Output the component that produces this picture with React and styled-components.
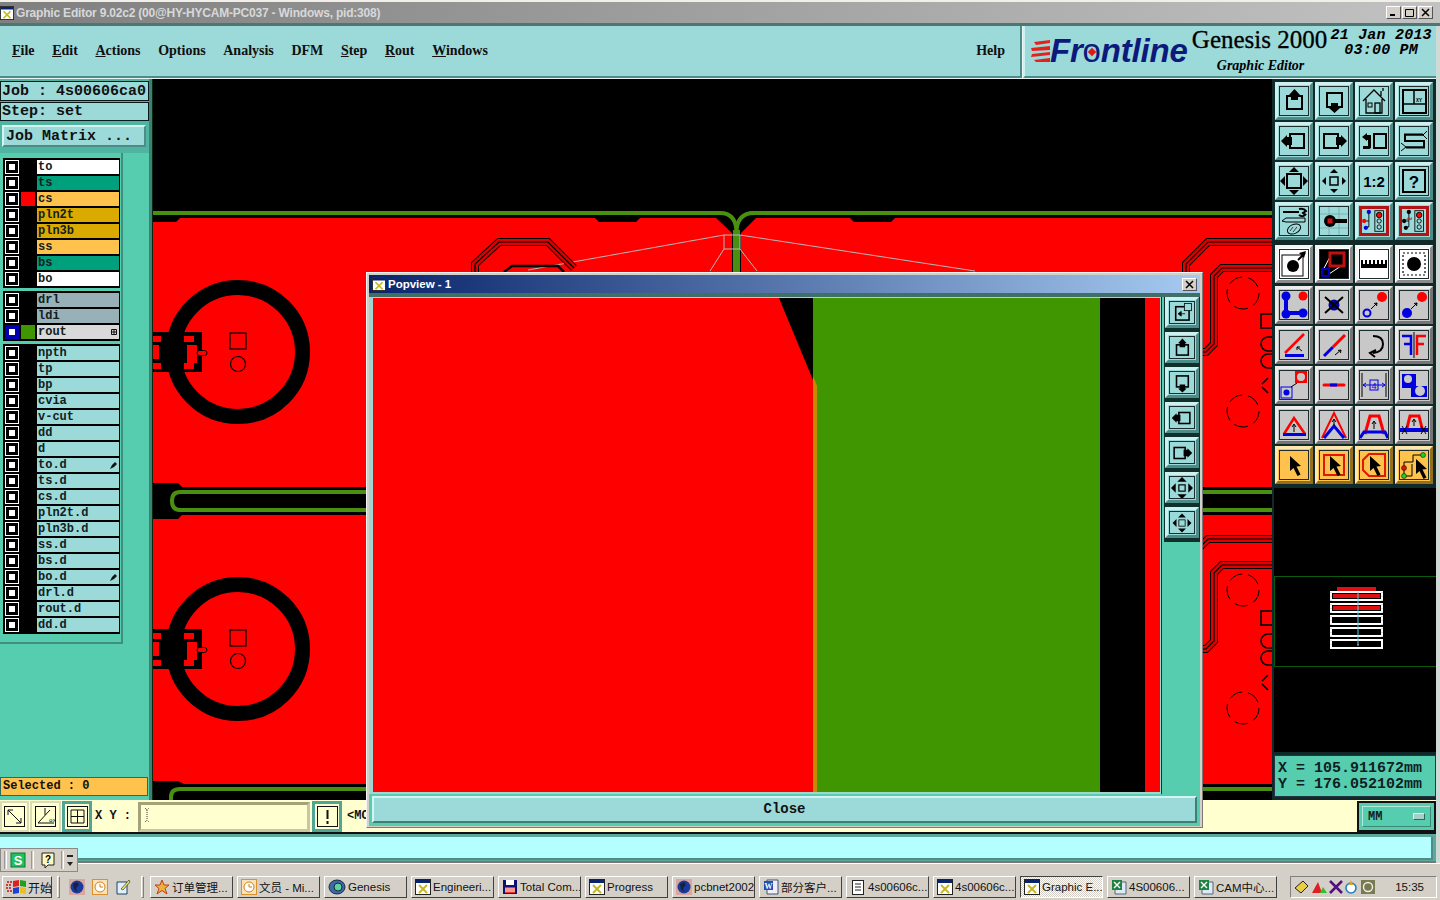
import React from 'react';
import styled, { createGlobalStyle } from 'styled-components';

const GlobalStyle = createGlobalStyle`
  html, body { margin: 0; padding: 0; background: #d4d0c8; overflow: hidden; }
  * { box-sizing: border-box; }
`;

const SANS = '"Liberation Sans", "Noto Sans CJK SC", sans-serif';
const SERIF = '"Liberation Serif", serif';
const MONO = '"Liberation Mono", monospace';
const FACE = '#9cd9d9';
const TEAL = '#57cdb0';

const tones = {
  teal: { face: FACE, light: '#cdf1f1', dark: '#4d8c88', line: '#1d3a3a' },
  gray: { face: '#c8c8c8', light: '#ededed', dark: '#757575', line: '#222' },
  white: { face: '#fff', light: '#f4f4f4', dark: '#8a8a8a', line: '#222' },
  orange: { face: '#ffc24d', light: '#ffe7ad', dark: '#94701c', line: '#222' },
};

const Screen = styled.div`
  position: relative;
  width: 1440px;
  height: 900px;
  overflow: hidden;
  background: #d4d0c8;
  display: flex;
  flex-direction: column;
`;

const TitleBar = styled.div`
  height: 26px;
  flex-shrink: 0;
  border-top: 2px solid #f2efe8;
  border-bottom: 3px solid #4d7773;
  background: linear-gradient(90deg, #7f7f7f, #c2c2c2);
  display: flex;
  align-items: center;
  font: bold 12px ${SANS};
  color: #d8d8d8;
  letter-spacing: -0.2px;
`;

const TitleText = styled.span`
  flex: 1;
  margin-left: 2px;
`;

const WinButtons = styled.div`
  display: flex;
  gap: 1px;
  margin-right: 7px;
`;

const WinButton = styled.div`
  width: 15px;
  height: 13px;
  background: #d4d0c8;
  border: 1px solid;
  border-color: #fff #555 #555 #fff;
  color: #000;
  display: flex;
  align-items: center;
  justify-content: center;
`;

const Body = styled.div`
  flex-shrink: 0;
  display: flex;
  flex-direction: column;
  border-right: 4px solid #cfd9d5;
`;

const MenuRow = styled.div`
  height: 53px;
  flex-shrink: 0;
  display: flex;
  background: #e8f7f5;
  padding-bottom: 1px;
`;

const MenuBar = styled.div`
  width: 1022px;
  background: ${FACE};
  border-bottom: 2px solid #4d8c88;
  border-right: 2px solid #4d8c88;
  display: flex;
  align-items: center;
  padding: 0 15px 0 12px;
  gap: 17.6px;
  font: bold 14px ${SERIF};
  color: #101010;
`;

const MenuItem = styled.span`
  &::first-letter {
    text-decoration: ${({ $plain }) => ($plain ? 'none' : 'underline')};
  }
`;

const Spacer = styled.span`
  flex: 1;
`;

const LogoPanel = styled.div`
  flex: 1;
  margin-left: 1px;
  background: ${FACE};
  border-left: 2px solid #cdf1f1;
  border-bottom: 2px solid #4d8c88;
  display: flex;
  position: relative;
  padding-left: 5px;
  color: #000;
`;

const LogoMark = styled.div`
  display: flex;
  align-items: center;
  height: 49px;
  padding-top: 1px;
`;

const LogoWord = styled.span`
  font: italic bold 33px ${SANS};
  color: #0c1a7c;
  letter-spacing: -0.2px;
`;

const LogoO = styled.span`
  position: relative;
  font-style: normal;
  font-weight: 400;
  &::after {
    content: '';
    position: absolute;
    left: 6px;
    top: 17px;
    width: 6px;
    height: 6px;
    background: #e01818;
    transform: rotate(45deg);
  }
`;

const Product = styled.div`
  width: 140px;
  margin-left: 2px;
  text-align: center;
`;

const ProductName = styled.div`
  font: 25px/28px ${SERIF};
  -webkit-text-stroke: 0.3px #000;
  white-space: nowrap;
`;

const ProductSub = styled.div`
  font: italic bold 14px ${SERIF};
  margin-top: 4px;
  padding-left: 2px;
`;

const Clock = styled.div`
  margin-left: 1px;
  padding-top: 2px;
  font: italic bold 15px/15px ${MONO};
  letter-spacing: 0.2px;
  text-align: center;
  white-space: pre;
`;

const Main = styled.div`
  height: 721px;
  flex-shrink: 0;
  display: flex;
  background: #000;
`;

const LeftPanel = styled.div`
  width: 152px;
  background: ${TEAL};
  border-right: 3px solid #3f7f74;
  display: flex;
  flex-direction: column;
`;

const JobBlock = styled.div`
  height: 74px;
  flex-shrink: 0;
  padding: 2px 0 0;
  background: #4fb5a0;
  display: flex;
  flex-direction: column;
  gap: 1px;
`;

const JobRow = styled.div`
  height: ${({ $h }) => $h}px;
  flex-shrink: 0;
  background: ${FACE};
  border: 1px solid #0a1a1a;
  font: bold 15px/${({ $line }) => $line}px ${MONO};
  color: #111;
  padding-left: 1px;
  white-space: pre;
`;

const MatrixButton = styled.div`
  height: 22px;
  flex-shrink: 0;
  margin: 3px 3px 0 2px;
  background: ${FACE};
  border: 2px solid;
  border-color: #d4f4f4 #4d8c88 #4d8c88 #d4f4f4;
  font: bold 15px/20px ${MONO};
  padding-left: 2px;
  color: #111;
  white-space: pre;
`;

const LayerArea = styled.div`
  height: 491px;
  width: 123px;
  background: ${TEAL};
  border-right: 2px solid #3f8f80;
  border-bottom: 2px solid #3f8f80;
  padding: 5px 0 0 3px;
  display: flex;
  flex-direction: column;
  gap: 3px;
  flex-shrink: 0;
`;

const LayerGroup = styled.div`
  width: 117px;
  background: #000;
  padding: 2px 0;
  display: flex;
  flex-direction: column;
  gap: 2px;
`;

const LayerRow = styled.div`
  height: 14px;
  display: flex;
`;

const Check = styled.div`
  width: 14px;
  height: 14px;
  margin-left: 2px;
  background: #fff;
  border: 1px solid ${({ $on }) => ($on ? '#0000b0' : '#fff')};
  box-shadow: inset 0 0 0 3px ${({ $on }) => ($on ? '#0000b0' : '#000')};
`;

const Swatch = styled.div`
  width: 14px;
  height: 14px;
  margin: 0 2px 0 2px;
  background: ${({ $color }) => $color || '#000'};
`;

const LayerName = styled.div`
  width: 82px;
  height: 14px;
  background: ${({ $color }) => $color};
  font: bold 12px/14px ${MONO};
  color: #102020;
  padding-left: 1px;
  display: flex;
  justify-content: space-between;
  align-items: center;
`;

const Mark = styled.span`
  margin-right: 2px;
  display: flex;
`;

const SelectedBar = styled.div`
  height: 19px;
  margin: auto 1px 4px 0;
  background: #ffc24d;
  border: 1px solid #2c6a60;
  font: bold 12px/17px ${MONO};
  color: #111;
  padding-left: 2px;
`;

const Canvas = styled.div`
  width: 1120px;
  background: #000;
`;

const Plot = styled.svg`
  display: block;
`;

const RightPanel = styled.div`
  flex: 1;
  background: #102a2a;
  display: flex;
  flex-direction: column;
  padding: 3px 0 0 3px;
`;

const IconGrid = styled.div`
  display: grid;
  grid-template-columns: repeat(4, 38px);
  gap: ${({ $gap }) => $gap ?? 2}px 2px;
  margin-bottom: ${({ $after }) => $after ?? 0}px;
`;

const ToolButton = styled.div`
  width: ${({ $w }) => $w || 38}px;
  height: ${({ $h }) => $h || 38}px;
  flex-shrink: 0;
  background: ${({ $tone }) => tones[$tone].face};
  border: 3px solid;
  border-color: ${({ $tone }) =>
    `${tones[$tone].light} ${tones[$tone].dark} ${tones[$tone].dark} ${tones[$tone].light}`};
  padding: 1px;
  display: flex;
`;

const ToolFace = styled.div`
  flex: 1;
  min-width: 0;
  border: ${({ $alert }) => ($alert ? '3px solid #b01414' : '1px solid #1c2c2c')};
  background: ${({ $dark }) => ($dark ? '#000' : 'transparent')};
  display: flex;
  align-items: center;
  justify-content: center;
  overflow: hidden;
`;

const MiniMap = styled.div`
  height: 264px;
  flex-shrink: 0;
  margin: 4px 0 3px -1px;
  background: #000;
`;

const Coords = styled.div`
  height: 42px;
  flex-shrink: 0;
  margin-left: -1px;
  background: ${TEAL};
  border: 1px solid #234;
  font: bold 15px/16px ${MONO};
  color: #102020;
  padding: 5px 0 0 3px;
  white-space: pre;
`;

const CommandRow = styled.div`
  height: 34px;
  flex-shrink: 0;
  background: #ffffd0;
  border-bottom: 2px solid #111;
  display: flex;
  align-items: stretch;
  padding-top: 1px;
`;

const CmdButton = styled.div`
  width: ${({ $w }) => $w}px;
  margin-right: ${({ $mr }) => $mr ?? 0}px;
  background: #ffffd0;
  border: ${({ $teal }) => ($teal ? '3px solid #4fa596' : '2px solid #dcdcb4')};
  display: flex;
  align-items: center;
  justify-content: center;
`;

const CmdIcon = styled.div`
  width: 21px;
  height: 21px;
  border: 1px solid #111;
  display: flex;
`;

const XYLabel = styled.div`
  width: 46px;
  padding-left: 3px;
  font: bold 12px/30px ${MONO};
  color: #111;
  white-space: pre;
`;

const CmdInput = styled.div`
  width: 172px;
  margin: 1px 2px 0 0;
  background: #ffffd0;
  border: 3px solid;
  border-color: #a3a37a #c8c8a0 #c8c8a0 #a3a37a;
  padding: 2px 0 0 3px;
  display: flex;
`;

const Prompt = styled.div`
  margin-left: 5px;
  font: bold 12px/31px ${MONO};
  color: #111;
`;

const UnitBox = styled.div`
  width: 79px;
  margin-left: auto;
  background: ${TEAL};
  border: 2px solid #111;
  padding: 3px;
  display: flex;
`;

const UnitButton = styled.div`
  flex: 1;
  background: ${TEAL};
  border: 1px solid;
  border-color: #b4eadb #3b8a76 #3b8a76 #b4eadb;
  font: bold 12px/22px ${MONO};
  color: #102020;
  padding-left: 5px;
  display: flex;
  justify-content: space-between;
  align-items: center;
`;

const UnitKnob = styled.span`
  width: 12px;
  height: 7px;
  margin-right: 5px;
  background: #a8cfc6;
  border: 1px solid;
  border-color: #e0f4ee #2b6a5a #2b6a5a #e0f4ee;
`;

const MessageWrap = styled.div`
  height: 29px;
  flex-shrink: 0;
  background: #5da79b;
  padding: 3px 0 1px;
  border-bottom: 2px solid #777;
`;

const MessageBar = styled.div`
  height: 23px;
  background: #b4ffff;
  border-right: 2px solid #4d8c88;
  border-bottom: 2px solid #4d8c88;
  margin-right: 3px;
`;

const FloatTools = styled.div`
  position: absolute;
  left: 0;
  top: 848px;
  width: 78px;
  height: 24px;
  background: #d4d0c8;
  border: 1px solid #8a8a8a;
  display: flex;
  align-items: center;
  z-index: 3;
`;

const Grip = styled.span`
  width: 3px;
  height: 18px;
  margin: 0 ${({ $r }) => $r}px 0 ${({ $l }) => $l}px;
  border-left: 1px solid #999;
  border-right: 1px solid #fff;
`;

const Taskbar = styled.div`
  flex: 1;
  background: #d4d0c8;
  border-top: 1px solid #fff;
  display: flex;
  align-items: center;
  padding: 12px 3px 2px 2px;
  font: 11.5px ${SANS};
  color: #111;
`;

const StartButton = styled.div`
  width: 50px;
  height: 22px;
  flex-shrink: 0;
  border: 1px solid;
  border-color: #fff #404040 #404040 #fff;
  display: flex;
  align-items: center;
  padding-left: 3px;
  gap: 1px;
  font-size: 12px;
  white-space: nowrap;
`;

const Divider = styled.span`
  width: 3px;
  height: 22px;
  flex-shrink: 0;
  margin: 0 ${({ $r }) => $r}px 0 ${({ $l }) => $l}px;
  border: 1px solid;
  border-color: #fff #808080 #808080 #fff;
`;

const Quick = styled.div`
  display: flex;
  gap: 7px;
  align-items: center;
`;

const TaskButtons = styled.div`
  display: flex;
  gap: 4px;
`;

const TaskButton = styled.div`
  width: 83px;
  height: 22px;
  flex-shrink: 0;
  border: 1px solid;
  border-color: ${({ $active }) =>
    $active ? '#404040 #fff #fff #404040' : '#fff #404040 #404040 #fff'};
  background: ${({ $active }) =>
    $active ? 'repeating-conic-gradient(#fff 0 25%, #d4d0c8 0 50%) 0 0 / 2px 2px' : '#d4d0c8'};
  display: flex;
  align-items: center;
  padding-left: 3px;
  gap: 2px;
  white-space: nowrap;
  overflow: hidden;
`;

const Tray = styled.div`
  margin-left: auto;
  width: 147px;
  height: 22px;
  flex-shrink: 0;
  border: 1px solid;
  border-color: #808080 #fff #fff #808080;
  display: flex;
  align-items: center;
  padding-left: 3px;
  gap: 1px;
`;

const TrayTime = styled.span`
  margin-left: auto;
  margin-right: 12px;
`;

/* floating window */
const Popup = styled.div`
  position: absolute;
  left: 366px;
  top: 272px;
  width: 837px;
  height: 556px;
  background: #d4d0c8;
  border: 1px solid;
  border-color: #f4f4f4 #7a7a7a #7a7a7a #f4f4f4;
  padding: 2px;
  display: flex;
  flex-direction: column;
  z-index: 2;
`;

const PopupTitle = styled.div`
  height: 18px;
  flex-shrink: 0;
  background: linear-gradient(90deg, #0a246a, #a6caf0);
  display: flex;
  align-items: center;
  padding-left: 3px;
  font: bold 11.5px ${SANS};
  color: #fff;
  gap: 2px;
`;

const PopupClose = styled(WinButton)`
  margin-left: auto;
  margin-right: 3px;
`;

const PopupBody = styled.div`
  height: 501px;
  flex-shrink: 0;
  background: ${TEAL};
  border-top: 4px solid #3f6f69;
  display: flex;
`;

const PlotFrame = styled.div`
  width: 794px;
  background: #9fd6cf;
  padding: 1px 0 0 4px;
`;

const SideTools = styled.div`
  flex: 1;
  padding: 0 0 0 2px;
  background: ${TEAL};
  border-left: 1px solid #1c2c2c;
  display: flex;
  flex-direction: column;
`;

const SideButton = styled.div`
  border-bottom: 2px solid #10302c;
  background: #10302c;
  width: 36px;
  height: 35px;
  padding: 0 1px;
  display: flex;
  flex-shrink: 0;
`;

const CloseRow = styled.div`
  flex: 1;
  background: ${TEAL};
  padding: 2px 3px 3px 3px;
  display: flex;
`;

const CloseButton = styled.div`
  flex: 1;
  background: ${FACE};
  border: 2px solid;
  border-color: #d4f4f4 #3f7f74 #3f7f74 #d4f4f4;
  font: bold 14px/23px ${MONO};
  text-align: center;
  color: #111;
`;

/* icon bits */
const Ico = ({ children, size = 28 }) => (
  <svg width={size} height={size} viewBox="1 1 28 28">
    {children}
  </svg>
);

const k = '#000';
const box = (x, y, w, h, sw = 2) => <rect x={x} y={y} width={w} height={h} fill="none" stroke={k} strokeWidth={sw} />;
const B = '#0000e0';
const R = '#ff0000';

const Cursor = () => <path d="M11 6 L11 21 L14.5 18 L18.5 26 L21.5 24.5 L17.5 16.5 L22 16 Z" fill={k} />;

const Lights = ({ fill = R }) => (
  <>
    <rect x="16" y="3" width="10" height="24" fill="none" stroke={k} />
    <circle cx="21" cy="8" r="3.2" fill={fill} stroke={k} />
    <circle cx="21" cy="15" r="2.5" fill="none" stroke={k} />
    <circle cx="21" cy="22" r="2.5" fill="none" stroke={k} />
  </>
);

const fourArrows = (o, r) => (
  <path
    d={`M15 ${o} l${r} ${r} h${-2 * r} z M15 ${30 - o} l${r} ${-r} h${-2 * r} z M${o} 15 l${r} ${r} v${-2 * r} z M${30 - o} 15 l${-r} ${r} v${-2 * r} z`}
    fill={k}
  />
);

const topIcons = [
  [<>{box(8, 10, 15, 13)}<path d="M15.5 3 L10 9 H12 V14 H19 V9 H21 Z" fill={k} /></>],
  [<>{box(8, 7, 15, 14)}<path d="M12 17 H19 V22 H21 L15.5 27 L10 22 H12 Z" fill={k} /></>],
  [<><path d="M4 15 L15 4 L26 15 M7 13 V27 H23 V13 M22 5 V10 M24 2 V5" fill="none" stroke={k} strokeWidth="1.3" /><rect x="9" y="17" width="4" height="4" fill="none" stroke={k} /><rect x="16" y="17" width="5" height="10" fill="none" stroke={k} strokeWidth="1.3" /></>],
  [<>{box(4, 4, 23, 23)}<path d="M15 4 V18 M4 18 H27" stroke={k} strokeWidth="1.5" /><text x="17" y="16" fontSize="5" fontFamily={MONO} fontWeight="bold">XY</text></>],
  [<>{box(11, 8, 14, 14)}<path d="M2 15 L8 9 V11 H13 V19 H8 V21 Z" fill={k} /></>],
  [<>{box(5, 8, 14, 14)}<path d="M28 15 L22 9 V11 H17 V19 H22 V21 Z" fill={k} /></>],
  [<>{box(15, 8, 12, 14)}<path d="M3 11 L8 7 V9 H12 V21 Q12 23 9 23 H4 V20 H9 V14 H8 V15 Z" fill={k} /></>],
  [<><path d="M28 5 L24 9 H6 V15 H25 V21 H7 L2 25 M28 13 L24 9 M2 17 L7 21" fill="none" stroke={k} strokeWidth="1" /><path d="M24 8.5 H6 V15 H25 V21.5 H7" fill="none" stroke={k} strokeWidth="2" /></>],
  [<>{box(8, 8, 14, 14)}{fourArrows(1, 5)}</>],
  [<>{box(11, 11, 8, 8, 1.5)}{fourArrows(3, 4)}</>],
  [<text x="15" y="21" fontSize="15" fontWeight="bold" fontFamily={SANS} textAnchor="middle">1:2</text>],
  [<>{box(4, 4, 22, 22)}<text x="15" y="21.5" fontSize="17" fontWeight="bold" fontFamily={SANS} textAnchor="middle">?</text></>],
  [<><path d="M4 6 H20 M20 3 Q25 2 27 5 L24 7 Q26 9 27 8 Q24 12 20 9" fill="none" stroke={k} strokeWidth="2" /><path d="M3 15 L7 12 H26 V16 H7 Z" fill="none" stroke={k} /><ellipse cx="15" cy="23" rx="7" ry="4.5" fill="none" stroke={k} transform="rotate(-25 15 23)" /><path d="M11 25 L14 21 M14 26 L18 21" stroke={k} strokeWidth=".7" /></>],
  [<><path d="M10 1 V29 M20 1 V29 M1 8 H29 M1 22 H29" stroke="#7fb0b0" /><circle cx="11" cy="15" r="6" fill={k} /><rect x="8.5" y="12.5" width="5" height="5" fill="#d01010" /><rect x="15" y="13" width="13" height="4" fill={k} /></>],
  [<><path d="M9 5 V15 H4 M9 15 V22 H6" fill="none" stroke={k} /><circle cx="9" cy="4.5" r="2.5" fill={B} /><circle cx="3.5" cy="15" r="2.5" fill={R} /><circle cx="5.5" cy="23" r="2.5" fill={B} /><Lights /></>, 'alert'],
  [<><path d="M9 5 V15 H4 M9 15 V22 H6" fill="none" stroke={k} /><circle cx="9" cy="4.5" r="2.5" fill={k} /><circle cx="3.5" cy="15" r="2.5" fill={k} /><circle cx="5.5" cy="23" r="2.5" fill={k} /><path d="M6 13 H12 M8 11 V13 M10 11 V13 M12 11 V13" stroke="#d01010" /><Lights /></>, 'alert'],
];

const whiteIcons = [
  [<>{box(3, 6, 21, 21, 1)}<circle cx="14" cy="17" r="6" fill={k} /><path d="M19 11 L26 4" stroke={k} strokeWidth="2" /><path d="M27 2 L20 4 L25 9 Z" fill={k} /></>],
  [<><path d="M12 6 L3 23 M25 15 L10 25" stroke="#fff" /><rect x="11" y="4" width="14" height="13" fill="#000" stroke="#c01010" strokeWidth="3" /><rect x="3" y="20" width="7" height="7" fill="#000" stroke="#0000c0" strokeWidth="2" /></>, 'dark'],
  [<path d="M2 11 V19 H28 V11 H26 V15 H24 V11 H22 V15 H20 V11 H18 V15 H16 V11 H14 V15 H12 V11 H10 V15 H8 V11 H6 V15 H4 V11 Z" fill={k} />],
  [<><rect x="4" y="4" width="22" height="22" fill="none" stroke={k} strokeDasharray="2 2" strokeWidth="1.2" /><circle cx="15" cy="15" r="7" fill={k} /></>],
];

const grayIcons = [
  [<><path d="M7 6 V23 H24" fill="none" stroke={B} strokeWidth="4" /><circle cx="7" cy="6" r="4.5" fill={B} /><circle cx="7" cy="24" r="4.5" fill={B} /><circle cx="24" cy="23" r="4.5" fill={B} /><circle cx="24" cy="6" r="4.5" fill={R} /></>],
  [<><circle cx="15" cy="15" r="5.5" fill="#0000a0" /><path d="M6 7 L24 23 M24 7 L6 23" stroke={k} strokeWidth="2" /></>],
  [<><circle cx="8" cy="23" r="3.5" fill="none" stroke={B} strokeWidth="2" /><circle cx="23" cy="7" r="5" fill={R} /><path d="M12 19 L18 13 M18 13 L15 13.5 M18 13 L17.5 16" fill="none" stroke={k} /></>],
  [<><circle cx="8" cy="23" r="5" fill={B} /><circle cx="23" cy="7" r="5" fill={R} /><path d="M12 19 L18 13 M18 13 L15 13.5 M18 13 L17.5 16" fill="none" stroke={k} /></>],
  [<><path d="M6 23 L25 4" stroke={R} strokeWidth="2.5" /><rect x="6" y="24" width="19" height="3" fill={B} /><path d="M18 17 L23 21 M18 17 L21 17 M18 17 L18 20" fill="none" stroke={k} /></>],
  [<><path d="M5 26 L14 17" stroke={B} strokeWidth="3" /><path d="M14 17 L26 5" stroke={R} strokeWidth="3" /><path d="M16 25 L22 20 M22 20 L19 20.5 M22 20 L21.5 23" fill="none" stroke={k} /></>],
  [<path d="M14 6 Q24 6 24 14 Q24 22 14 23 M17 20 L11 23 L16 27" fill="none" stroke={k} strokeWidth="2" />],
  [<><path d="M15 2 V28" stroke={k} /><path d="M3 6 H12 V25 M5 14 H12" fill="none" stroke={B} strokeWidth="2.5" /><path d="M27 6 H18 V25 M18 14 H25" fill="none" stroke={R} strokeWidth="2.5" /></>],
  [<><rect x="16" y="1" width="12" height="12" fill={R} /><circle cx="22" cy="7" r="4" fill="#c8c8c8" /><rect x="2" y="17" width="11" height="11" fill="none" stroke={B} /><circle cx="7.5" cy="22.5" r="3" fill={B} /><path d="M12 17 L18 13" stroke={k} /></>],
  [<><path d="M5 15 H25" stroke={R} strokeWidth="3" strokeLinecap="round" /><path d="M11 15 H18" stroke={B} strokeWidth="3" /></>],
  [<><path d="M3 3 V27 M27 3 V27" stroke={k} /><path d="M4 15 H26 M4 15 L7 13 M4 15 L7 17 M26 15 L23 13 M26 15 L23 17" fill="none" stroke={B} /><rect x="11" y="10" width="8" height="10" fill="none" stroke={B} /><text x="15" y="18.5" fontSize="9" fill={B} textAnchor="middle" fontFamily={SANS}>4</text></>],
  [<><path d="M3 4 H17 V16 H28 V27 H12 V18 H3 Z" fill={B} /><circle cx="9" cy="9" r="4" fill="#c8c8c8" /><circle cx="21" cy="21" r="5" fill="#c8c8c8" /></>],
  [<><path d="M5 24 L15 8 L26 24" fill="none" stroke={R} strokeWidth="2.5" /><rect x="4" y="23" width="23" height="3" fill={B} /><path d="M15 22 V15 M13 17 L15 14 L17 17" fill="none" stroke={k} /></>],
  [<><path d="M3 28 L15 3 L27 28" fill="none" stroke={R} strokeWidth="2" /><path d="M5 28 L15 16 L25 28" fill="none" stroke={B} strokeWidth="3" /><path d="M15 15 V10 M13 12 L15 9 L17 12" fill="none" stroke={k} /></>],
  [<><path d="M6 24 L11 6 H20 L25 24" fill="none" stroke={R} strokeWidth="3" /><path d="M1 28 L5 22 H26 L29 28" fill="none" stroke={B} strokeWidth="3" /><path d="M15 19 V12 M13 14 L15 11 L17 14" fill="none" stroke={k} /></>],
  [<><path d="M7 22 L11 6 H20 L24 22" fill="none" stroke={R} strokeWidth="3" /><rect x="1" y="18" width="28" height="4" fill={B} /><path d="M3 16 L8 24 M8 16 L3 24 M22 16 L27 24 M27 16 L22 24" stroke={k} /><path d="M15 16 V10 M13 12 L15 9 L17 12" fill="none" stroke={k} /></>],
];

const orangeIcons = [
  [<Cursor />],
  [<><rect x="5" y="5" width="20" height="20" fill="none" stroke="#e01800" strokeWidth="2" /><Cursor /></>],
  [<><path d="M10 4 H26 V26 H10 L4 20 V10 Z" fill="none" stroke="#e01800" strokeWidth="2" /><Cursor /></>],
  [<><path d="M5 20 V12 H14 V5 H24 M5 20 V26 H13 V14" fill="none" stroke={k} /><circle cx="5" cy="18" r="2.5" fill="#e01800" stroke={k} strokeWidth=".5" /><circle cx="24" cy="5" r="2.5" fill="#20d020" stroke={k} strokeWidth=".5" /><circle cx="5" cy="26" r="2.5" fill="#20d020" stroke={k} strokeWidth=".5" /><g transform="translate(6 3)"><Cursor /></g></>],
];

const popupIcons = [
  <>{box(7, 7, 17, 17, 2)}<rect x="18" y="3" width="9" height="9" fill="#9cd9d9" stroke={k} /><path d="M10 16 L14 13 V19 Z M14 16 H19" fill={k} stroke={k} /></>,
  <>{box(8, 11, 15, 13, 2)}<path d="M15.5 3 L10 9 H12 V14 H19 V9 H21 Z" fill={k} /></>,
  <>{box(8, 6, 15, 14, 2)}<path d="M12 17 H19 V22 H21 L15.5 27 L10 22 H12 Z" fill={k} /></>,
  <>{box(11, 8, 14, 14, 2)}<path d="M2 15 L8 9 V11 H13 V19 H8 V21 Z" fill={k} /></>,
  <>{box(5, 8, 14, 14, 2)}<path d="M28 15 L22 9 V11 H17 V19 H22 V21 Z" fill={k} /></>,
  <>{box(11, 11, 8, 8, 1.5)}{fourArrows(1, 6)}</>,
  <>{box(11, 11, 8, 8, 1)}{fourArrows(3, 5)}</>,
];

const IconSvg = styled.svg`
  flex-shrink: 0;
`;

const XIcon = ({ size = 16 }) => (
  <IconSvg width={size} height={size} viewBox="0 0 16 16">
    <rect x=".5" y=".5" width="15" height="15" fill="#fff" stroke="#222" />
    <rect x="1" y="1" width="14" height="3" fill="#0a246a" />
    <path d="M4 6 L12 14 M12 6 L4 14" stroke="#c8b820" strokeWidth="2" />
  </IconSvg>
);

const Globe = () => (
  <IconSvg width="16" height="16" viewBox="0 0 16 16">
    <rect width="16" height="16" fill="#d8a8a0" />
    <circle cx="8" cy="8" r="6.5" fill="#1a3a9c" />
    <path d="M4 5 L8 3 L10 6 L7 9 L8 13 L5 10 Z" fill="#162040" />
  </IconSvg>
);

const ClockIcon = () => (
  <IconSvg width="16" height="16" viewBox="0 0 16 16">
    <rect x=".5" y=".5" width="15" height="15" fill="#fbe3b8" stroke="#d89030" />
    <circle cx="8" cy="8" r="5" fill="#fff" stroke="#d08020" />
    <path d="M8 5 V8 H11" stroke="#d08020" fill="none" />
  </IconSvg>
);

const NoteIcon = () => (
  <IconSvg width="16" height="16" viewBox="0 0 16 16">
    <path d="M2 3 H12 V15 H2 Z" fill="#dff0ff" stroke="#204060" />
    <path d="M6 10 L14 1 L15 3 L8 11 Z" fill="#f0e060" stroke="#222" strokeWidth=".6" />
  </IconSvg>
);

const Star = () => (
  <IconSvg width="16" height="16" viewBox="0 0 16 16">
    <path d="M8 1 L10 6 H15 L11 9.5 L13 15 L8 11.5 L3 15 L5 9.5 L1 6 H6 Z" fill="#f0b040" stroke="#c04010" />
  </IconSvg>
);

const GenesisIcon = () => (
  <IconSvg width="18" height="16" viewBox="0 0 18 16">
    <ellipse cx="9" cy="8" rx="8" ry="7" fill="#3a6aa8" stroke="#18284a" />
    <circle cx="10" cy="8" r="4" fill="#60d0a0" stroke="#103030" />
  </IconSvg>
);

const Floppy = () => (
  <IconSvg width="16" height="16" viewBox="0 0 16 16">
    <rect x="1" y="1" width="14" height="14" fill="#101070" />
    <rect x="4" y="1" width="8" height="5" fill="#fff" />
    <rect x="3" y="8" width="10" height="6" fill="#e83030" />
    <path d="M3 10 H13 M3 12 H13" stroke="#fff" />
  </IconSvg>
);

const WordIcon = () => (
  <IconSvg width="16" height="16" viewBox="0 0 16 16">
    <path d="M4 1 H15 V15 H4 Z" fill="#eef" stroke="#456" />
    <rect x="1" y="2" width="9" height="9" fill="#2050b0" />
    <text x="5.5" y="9.5" fontSize="8" fontWeight="bold" fill="#fff" textAnchor="middle" fontFamily={SERIF}>W</text>
  </IconSvg>
);

const NotepadIcon = () => (
  <IconSvg width="16" height="16" viewBox="0 0 16 16">
    <rect x="2.5" y="1.5" width="11" height="14" fill="#fff" stroke="#222" />
    <path d="M5 5 H11 M5 8 H11 M5 11 H11" stroke="#222" />
  </IconSvg>
);

const ExcelIcon = () => (
  <IconSvg width="16" height="16" viewBox="0 0 16 16">
    <path d="M4 3 H15 V15 H4 Z" fill="#dde8f8" stroke="#567" />
    <rect x="1" y="1" width="10" height="10" fill="#208040" />
    <path d="M3 3 L9 9 M9 3 L3 9" stroke="#fff" strokeWidth="1.4" />
  </IconSvg>
);

const Flag = () => (
  <IconSvg width="21" height="16" viewBox="0 0 21 16">
    <path d="M1 3 H6 M0 6 H6 M0 9 H6 M1 12 H6" stroke="#c01010" strokeWidth="1.5" strokeDasharray="2 1" />
    <path d="M7 2 L13 1 V7 L7 8 Z" fill="#e02020" />
    <path d="M14 1 L20 2 V8 L14 7 Z" fill="#20a020" />
    <path d="M7 9 L13 8 V14 L7 15 Z" fill="#2040d0" />
    <path d="M14 8 L20 9 V15 L14 14 Z" fill="#e8c020" />
  </IconSvg>
);

const menu = ['File', 'Edit', 'Actions', 'Options', 'Analysis', 'DFM', 'Step', 'Rout', 'Windows'];

const W = '#ffffff';
const G = '#00a07c';
const O = '#ffc24d';
const D = '#dbaa00';
const S = '#98b0b8';

const boardLayers = [
  { name: 'to', color: W },
  { name: 'ts', color: G },
  { name: 'cs', color: O, swatch: '#ff0000' },
  { name: 'pln2t', color: D },
  { name: 'pln3b', color: D },
  { name: 'ss', color: O },
  { name: 'bs', color: G },
  { name: 'bo', color: W },
];

const drillLayers = [
  { name: 'drl', color: S },
  { name: 'ldi', color: S },
  { name: 'rout', color: '#d9d9d9', swatch: '#409600', active: true, mark: 'grid' },
];

const miscLayers = [
  'npth', 'tp', 'bp', 'cvia', 'v-cut', 'dd', 'd', 'to.d', 'ts.d', 'cs.d',
  'pln2t.d', 'pln3b.d', 'ss.d', 'bs.d', 'bo.d', 'drl.d', 'rout.d', 'dd.d',
].map((name) => ({
  name,
  color: FACE,
  mark: name === 'to.d' || name === 'bo.d' ? 'pen' : undefined,
}));

const tasks = [
  { label: '订单管理...', icon: <Star /> },
  { label: '文员 - Mi...', icon: <ClockIcon /> },
  { label: 'Genesis', icon: <GenesisIcon /> },
  { label: 'Engineeri...', icon: <XIcon /> },
  { label: 'Total Com...', icon: <Floppy /> },
  { label: 'Progress', icon: <XIcon /> },
  { label: 'pcbnet2002', icon: <Globe /> },
  { label: '部分客户...', icon: <WordIcon /> },
  { label: '4s00606c...', icon: <NotepadIcon /> },
  { label: '4s00606c...', icon: <XIcon /> },
  { label: 'Graphic E...', icon: <XIcon />, active: true },
  { label: '4S00606...', icon: <ExcelIcon /> },
  { label: 'CAM中心...', icon: <ExcelIcon /> },
];

const LayerMark = ({ type }) => (
  <Mark>
    {type === 'grid' ? (
      <svg width="6" height="6" viewBox="0 0 6 6">
        <path d="M.5 .5 H5.5 V5.5 H.5 Z M3 0 V6 M0 3 H6" stroke="#111" fill="none" />
      </svg>
    ) : (
      <svg width="7" height="7" viewBox="0 0 7 7">
        <path d="M0 7 L2 3 L5 0 L7 2 L4 5 Z" fill="#111" />
      </svg>
    )}
  </Mark>
);

const Layers = ({ items }) => (
  <LayerGroup>
    {items.map((l) => (
      <LayerRow key={l.name}>
        <Check $on={l.active} />
        <Swatch $color={l.swatch} />
        <LayerName $color={l.color}>
          {l.name}
          {l.mark && <LayerMark type={l.mark} />}
        </LayerName>
      </LayerRow>
    ))}
  </LayerGroup>
);

const Tools = ({ items, tone, gap, after }) => (
  <IconGrid $gap={gap} $after={after}>
    {items.map(([icon, mode], i) => (
      <ToolButton key={i} $tone={tone}>
        <ToolFace $alert={mode === 'alert'} $dark={mode === 'dark'}>
          <Ico size={mode === 'alert' ? 24 : 28}>{icon}</Ico>
        </ToolFace>
      </ToolButton>
    ))}
  </IconGrid>
);

const RED = '#ff0000';
const TRACE_GREEN = '#4a9010';

// the little mounting hole with its ring and tab, repeated down the panel
const Hole = ({ dy }) => (
  <g transform={`translate(0 ${dy})`}>
    <circle cx="238" cy="352" r="64.5" fill="none" stroke="#000" strokeWidth="15" />
    <rect x="152" y="332" width="50" height="40" fill="#000" />
    <path d="M153 336 h8 v6 h-8 z M153 345 h6 v14 h-6 z M153 363 h8 v6 h-8 z M184 336 h10 v6 h-10 z M187 345 h10 v18 h-10 z M184 363 h10 v6 h-10 z" fill={RED} />
    <rect x="197" y="350.5" width="10" height="5" rx="2.5" fill={RED} stroke="#000" />
    <rect x="230" y="333" width="16" height="16" fill="none" stroke="#000" strokeWidth="1.2" />
    <circle cx="238" cy="364" r="7.5" fill="none" stroke="#000" strokeWidth="1.2" />
  </g>
);

const triple = (d) => (
  <>
    <path d={d} fill="none" stroke="#000" strokeWidth="8" />
    <path d={d} fill="none" stroke="#e00000" strokeWidth="6" />
    <path d={d} fill="none" stroke="#000" strokeWidth="1.2" />
  </>
);

const RightTraces = ({ dy }) => (
  <g transform={`translate(0 ${dy})`} fill="none" stroke="#000">
    {triple('M1272 242 H1208 L1186 264 V276')}
    {triple('M1272 268 H1222 L1214 276 V344 L1206 352 H1202')}
    <circle cx="1243" cy="293" r="16" strokeDasharray="14 6" />
    <circle cx="1243" cy="411" r="16" strokeDasharray="14 6" />
    <rect x="1261" y="314" width="14" height="14" strokeWidth="1.6" />
    <rect x="1261" y="337" width="18" height="14" rx="7" strokeWidth="1.6" />
    <rect x="1261" y="354" width="18" height="14" rx="7" strokeWidth="1.6" />
    <path d="M1268 378 L1262 384 M1262 387 L1268 393" strokeWidth="1.6" />
  </g>
);

const Board = () => (
  <Plot width="1120" height="721" viewBox="152 79 1120 721">
    <rect x="152" y="79" width="1120" height="721" fill="#000" />
    <rect x="153" y="218" width="1119" height="566" fill={RED} />
    {/* top edge notches */}
    <path d="M153 218 H180 L176 222 H153 Z M595 218 H640 L636 222 H599 Z M850 218 H895 L891 222 H854 Z" fill="#000" />
    <rect x="153" y="211" width="566" height="4" fill={TRACE_GREEN} />
    <rect x="750" y="211" width="522" height="4" fill={TRACE_GREEN} />
    {/* junction at the top of the board */}
    <path d="M716 218 H756 L741 233 V272 H732 V233 Z" fill="#000" />
    <path d="M716 213 H720 Q736 213 736.5 232 Q737 213 754 213" fill="none" stroke={TRACE_GREEN} strokeWidth="4" />
    <rect x="733" y="230" width="7" height="42" fill={TRACE_GREEN} />
    <path d="M528 270 L724 235 H740 L975 271 M724 235 V249 H740 V235 M724 249 L710 271 M740 249 L757 271" fill="none" stroke="#b8b8b8" />
    {/* left cutout */}
    {triple('M475 272 V264 L499 242 H548 L574 268')}
    <path d="M504 272 L512 266 H558 L564 272" fill="none" stroke="#000" strokeWidth="2.5" />
    <Hole dy={0} />
    <Hole dy={297} />
    {/* slot between panels */}
    <path d="M153 483 H178 L182 487 H1272 V515 H182 L178 519 H153 Z" fill="#000" />
    <path d="M1272 492 H180 Q172 492 172 501 Q172 510 180 510 H1272" fill="none" stroke={TRACE_GREEN} strokeWidth="4" />
    <RightTraces dy={0} />
    <RightTraces dy={297} />
    {/* bottom edge */}
    <path d="M153 781 H178 L184 784 H1272 V800 H153 Z" fill="#000" />
    <path d="M171 800 V797 Q171 789 180 789 H1272" fill="none" stroke={TRACE_GREEN} strokeWidth="4" />
    <rect x="152" y="79" width="1" height="721" fill="#0a2a10" />
  </Plot>
);

const PopupPlot = () => (
  <Plot width="787" height="494" viewBox="373 298 787 494">
    <rect x="373" y="298" width="787" height="494" fill={RED} />
    <rect x="813" y="298" width="287" height="494" fill="#409600" />
    <path d="M779 298 H813 V380 Z" fill="#000" />
    <path d="M813 376 L817 386 V792 H813 Z" fill="#c88a00" />
    <rect x="1100" y="298" width="45" height="494" fill="#000" />
  </Plot>
);

const miniBars = [592, 604, 616, 628, 640];

const MiniBoard = () => (
  <Plot width="162" height="264" viewBox="1274 488 162 264">
    <path d="M1274 576.5 H1436 M1274 666.5 H1436 M1274.5 576 V667" stroke="#0c5a0c" fill="none" />
    <rect x="1337" y="587" width="39" height="5" fill="#e01010" />
    {miniBars.map((y, i) => (
      <g key={y}>
        <rect x="1331" y={y} width="51" height="8" fill="none" stroke="#fff" strokeWidth="2" />
        {i < 2 && <rect x="1333" y={y + 2} width="47" height="4" fill="#e01010" />}
      </g>
    ))}
    <path d="M1358 592 V646" stroke="#60d0e0" />
    <path d="M1331 592 V646 M1382 592 V640 M1358 640 V646" stroke="#bbb" strokeDasharray="1 3" />
  </Plot>
);

const App = () => (
  <Screen>
    <GlobalStyle />
    <TitleBar>
      <XIcon size={14} />
      <TitleText>Graphic Editor 9.02c2 (00@HY-HYCAM-PC037 - Windows, pid:308)</TitleText>
      <WinButtons>
        <WinButton><svg width="9" height="9"><rect x="1" y="6" width="5" height="2" /></svg></WinButton>
        <WinButton><svg width="9" height="9"><path d="M.5 1.5 H8.5 V8.5 H.5 Z" fill="none" stroke="#000" /></svg></WinButton>
        <WinButton><svg width="9" height="9"><path d="M1 1 L8 8 M8 1 L1 8" stroke="#000" strokeWidth="1.5" /></svg></WinButton>
      </WinButtons>
    </TitleBar>
    <Body>
      <MenuRow>
        <MenuBar>
          {menu.map((m) => (
            <MenuItem key={m} $plain={m === 'Options' || m === 'Analysis' || m === 'DFM'}>{m}</MenuItem>
          ))}
          <Spacer />
          <MenuItem $plain>Help</MenuItem>
        </MenuBar>
        <LogoPanel>
          <LogoMark>
            <svg width="20" height="24" viewBox="0 0 20 24">
              <path d="M4 3 L20 1 V4 L6 6 Z M1 9 L20 7 V11 L2 12 Z M2 15 L20 13 V16 L1 18 Z M4 21 L20 19 V23 L6 23 Z" fill="#e8201c" />
            </svg>
            <LogoWord>Fr<LogoO>o</LogoO>ntline</LogoWord>
          </LogoMark>
          <Product>
            <ProductName>Genesis 2000</ProductName>
            <ProductSub>Graphic Editor</ProductSub>
          </Product>
          <Clock>{'21 Jan 2013\n03:00 PM'}</Clock>
        </LogoPanel>
      </MenuRow>
      <Main>
        <LeftPanel>
          <JobBlock>
            <JobRow $h={20} $line={20}>{'Job : 4s00606ca0'}</JobRow>
            <JobRow $h={19} $line={17}>{'Step: set'}</JobRow>
            <MatrixButton>{'Job Matrix ...'}</MatrixButton>
          </JobBlock>
          <LayerArea>
            <Layers items={boardLayers} />
            <Layers items={drillLayers} />
            <Layers items={miscLayers} />
          </LayerArea>
          <SelectedBar>Selected : 0</SelectedBar>
        </LeftPanel>
        <Canvas>
          <Board />
        </Canvas>
        <RightPanel>
          <Tools items={topIcons} tone="teal" after={5} />
          <Tools items={whiteIcons} tone="white" after={3} />
          <Tools items={grayIcons} tone="gray" after={2} />
          <Tools items={orangeIcons} tone="orange" />
          <MiniMap>
            <MiniBoard />
          </MiniMap>
          <Coords>{'X = 105.911672mm\nY = 176.052102mm'}</Coords>
        </RightPanel>
      </Main>
      <CommandRow>
        <CmdButton $w={29} $mr={1}>
          <CmdIcon>
            <svg width="19" height="19" viewBox="0 0 19 19"><path d="M3 3 L16 16 M3 3 H8 M3 3 V8 M16 16 H11 M16 16 V11" stroke="#111" fill="none" /></svg>
          </CmdIcon>
        </CmdButton>
        <CmdButton $w={31} $mr={1}>
          <CmdIcon>
            <svg width="19" height="19" viewBox="0 0 19 19"><path d="M2 16 L14 3 M2 16 H18 M9 1 V8" stroke="#111" fill="none" /><text x="13" y="15" fontSize="6" fontFamily={MONO}>ox</text></svg>
          </CmdIcon>
        </CmdButton>
        <CmdButton $w={30} $teal>
          <CmdIcon>
            <svg width="19" height="19" viewBox="0 0 19 19"><path d="M3 3 H16 V16 H3 Z M9.5 3 V16 M3 9.5 H16" stroke="#111" fill="none" /></svg>
          </CmdIcon>
        </CmdButton>
        <XYLabel>X Y :</XYLabel>
        <CmdInput>
          <svg width="6" height="16" viewBox="0 0 6 16"><path d="M1 1 L3 3 L5 1 M3 3 V13 M1 15 L3 13 L5 15" stroke="#333" fill="none" strokeDasharray="1 1" /></svg>
        </CmdInput>
        <CmdButton $w={30} $teal>
          <CmdIcon>
            <svg width="19" height="19" viewBox="0 0 19 19"><path d="M9.5 3 V12 M9.5 14 V17" stroke="#111" strokeWidth="2" /></svg>
          </CmdIcon>
        </CmdButton>
        <Prompt>{'<MO'}</Prompt>
        <UnitBox>
          <UnitButton>
            MM
            <UnitKnob />
          </UnitButton>
        </UnitBox>
      </CommandRow>
      <MessageWrap>
        <MessageBar />
      </MessageWrap>
    </Body>
    <Taskbar>
      <StartButton>
        <Flag />
        开始
      </StartButton>
      <Divider $l={5} $r={9} />
      <Quick>
        <Globe />
        <ClockIcon />
        <NoteIcon />
      </Quick>
      <Divider $l={10} $r={6} />
      <TaskButtons>
        {tasks.map((t, i) => (
          <TaskButton key={i} $active={t.active}>
            {t.icon}
            {t.label}
          </TaskButton>
        ))}
      </TaskButtons>
      <Tray>
        <svg width="84" height="16" viewBox="0 0 84 16">
          <path d="M1 9 L9 2 L14 7 L7 14 Z" fill="#e8d040" stroke="#222" />
          <path d="M18 14 L24 3 L28 14 Z" fill="#e02020" />
          <path d="M26 14 L29 8 L33 14 Z" fill="#30c030" />
          <path d="M36 2 L48 14 M48 2 L36 14" stroke="#501080" strokeWidth="2.5" />
          <circle cx="57" cy="9" r="5" fill="#fff" stroke="#2080c0" strokeWidth="1.6" />
          <path d="M57 1 L59 6 H55 Z" fill="#e8a020" />
          <rect x="67" y="1" width="14" height="14" fill="#7a7a50" />
          <circle cx="74" cy="8" r="4.5" fill="none" stroke="#eee" strokeWidth="1.4" />
        </svg>
        <TrayTime>15:35</TrayTime>
      </Tray>
    </Taskbar>
    <FloatTools>
      <Grip $l={3} $r={3} />
      <svg width="16" height="16" viewBox="0 0 16 16">
        <rect x="1" y="1" width="14" height="14" fill="#20c060" stroke="#0a7a30" />
        <text x="8" y="13" fontSize="13" fontWeight="bold" fill="#fff" textAnchor="middle" fontFamily={SANS}>S</text>
      </svg>
      <Grip $l={5} $r={6} />
      <svg width="16" height="17" viewBox="0 0 16 17">
        <path d="M2 1 H14 V13 H8 L5 16 V13 H2 Z" fill="#fff8c0" stroke="#222" />
        <text x="8" y="11" fontSize="10" fontWeight="bold" textAnchor="middle" fontFamily={SANS}>?</text>
      </svg>
      <Grip $l={5} $r={1} />
      <svg width="10" height="16" viewBox="0 0 10 16">
        <path d="M2 3 H8 V5 H2 Z M2 10 H8 L5 14 Z" fill="#222" />
      </svg>
    </FloatTools>
    <Popup>
      <PopupTitle>
        <XIcon size={14} />
        Popview - 1
        <PopupClose>
          <svg width="9" height="9"><path d="M1 1 L8 8 M8 1 L1 8" stroke="#000" strokeWidth="1.5" /></svg>
        </PopupClose>
      </PopupTitle>
      <PopupBody>
        <PlotFrame>
          <PopupPlot />
        </PlotFrame>
        <SideTools>
          {popupIcons.map((icon, i) => (
            <SideButton key={i}>
              <ToolButton $tone="teal" $w={34} $h={31}>
                <ToolFace>
                  <Ico size={22}>{icon}</Ico>
                </ToolFace>
              </ToolButton>
            </SideButton>
          ))}
        </SideTools>
      </PopupBody>
      <CloseRow>
        <CloseButton>Close</CloseButton>
      </CloseRow>
    </Popup>
  </Screen>
);

export default App;
